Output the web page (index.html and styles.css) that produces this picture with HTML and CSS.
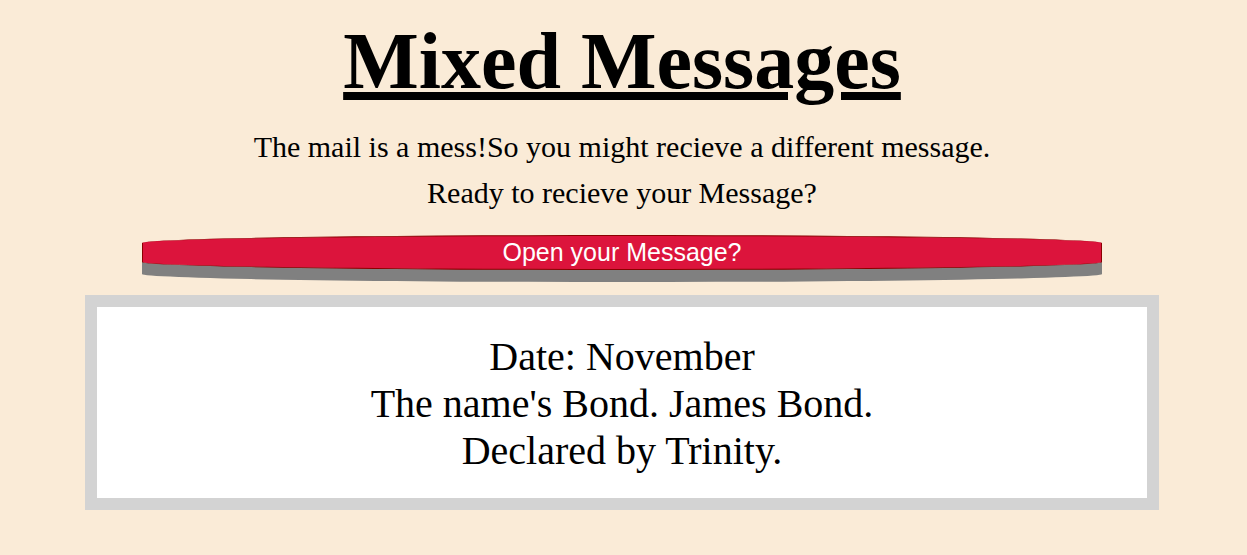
FILE: index.html
```html
<!DOCTYPE html>
<html>
<head>
<meta charset="utf-8">
<title>Mixed Messages</title>
<link rel="stylesheet" href="styles.css">
</head>
<body>
<header class="intro">
  <h1 class="title">Mixed Messages</h1>
  <p class="lead">The mail is a mess!So you might recieve a different message.</p>
  <p class="lead">Ready to recieve your Message?</p>
</header>
<button class="open-btn">Open your Message?</button>
<section class="message">
  <p class="message-line">Date: November</p>
  <p class="message-line">The name's Bond. James Bond.</p>
  <p class="message-line">Declared by Trinity.</p>
</section>
</body>
</html>
```
FILE: styles.css
```css
html, body {
  margin: 0;
  padding: 0;
}
body {
  background: #faebd7;
  font-family: "Liberation Serif", "Times New Roman", serif;
  color: #000;
  display: flex;
  flex-direction: column;
  align-items: center;
  padding-top: 13px;
  padding-right: 3px;
}
.intro {
  text-align: center;
}
.title {
  margin: 0 0 15px;
  font-size: 80px;
  font-weight: bold;
  text-decoration: underline;
  line-height: 96px;
}
.lead {
  margin: 0;
  font-size: 30px;
  line-height: 46px;
}
.open-btn {
  margin-top: 19px;
  width: 960px;
  height: 35px;
  background: #dc143c;
  border: 1px solid #8b0000;
  border-radius: 50% / 8px;
  box-shadow: 0 12px 0 #808080;
  color: #fff;
  font-family: "Liberation Sans", Arial, sans-serif;
  font-size: 25px;
  line-height: 33px;
  padding: 0;
  cursor: pointer;
}
.message {
  margin-top: 25px;
  width: 1050px;
  border: 12px solid #d3d3d3;
  background: #fff;
  text-align: center;
  padding: 26px 0 24px;
  box-sizing: content-box;
}
.message-line {
  margin: 0;
  font-size: 40px;
  line-height: 47px;
}
```
